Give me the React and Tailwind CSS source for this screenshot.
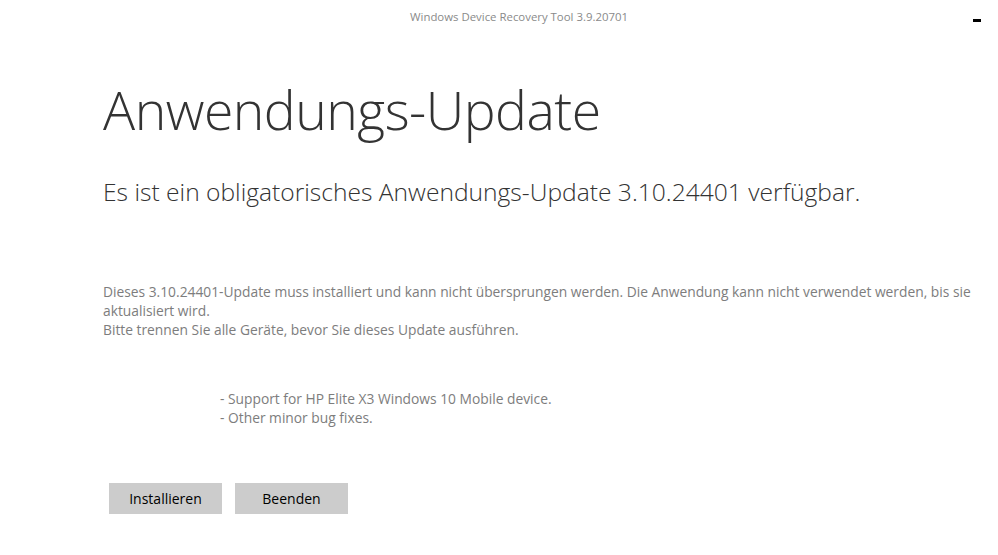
import React from 'react';

export default function App() {
  return (
    <div className="w-[998px] h-[555px] bg-white relative overflow-hidden" style={{ fontFamily: '"Open Sans", "Noto Sans", sans-serif' }}>
      {/* Title bar */}
      <div className="h-[34px] pl-[40px] flex items-center justify-center">
        <span className="text-[11.4px] text-[#8a8a8a] leading-none">Windows Device Recovery Tool 3.9.20701</span>
      </div>
      <div className="absolute right-[17px] top-[19px] w-[8px] h-[3px] bg-black" />

      <div className="pl-[103px] pr-[20px]">
        <h1 className="mt-[49px] text-[53.5px] font-light text-[#333] leading-none tracking-[-0.5px]">Anwendungs-Update</h1>
        <p className="mt-[43px] text-[24.6px] font-light text-[#333] leading-none">Es ist ein obligatorisches Anwendungs-Update 3.10.24401 verfügbar.</p>

        <div className="mt-[78px] text-[13.8px] text-[#7d7d7d] leading-[19px]">
          <p>Dieses 3.10.24401-Update muss installiert und kann nicht übersprungen werden. Die Anwendung kann nicht verwendet werden, bis sie aktualisiert wird.</p>
          <p>Bitte trennen Sie alle Geräte, bevor Sie dieses Update ausführen.</p>
        </div>

        <div className="mt-[50px] pl-[117px] text-[13.8px] text-[#7d7d7d] leading-[19px]">
          <p>- Support for HP Elite X3 Windows 10 Mobile device.</p>
          <p>- Other minor bug fixes.</p>
        </div>

        <div className="mt-[56px] pl-[6px] flex gap-[13px]">
          <button className="w-[113px] h-[31px] bg-[#cccccc] text-[14px] text-black">Installieren</button>
          <button className="w-[113px] h-[31px] bg-[#cccccc] text-[14px] text-black">Beenden</button>
        </div>
      </div>
    </div>
  );
}
